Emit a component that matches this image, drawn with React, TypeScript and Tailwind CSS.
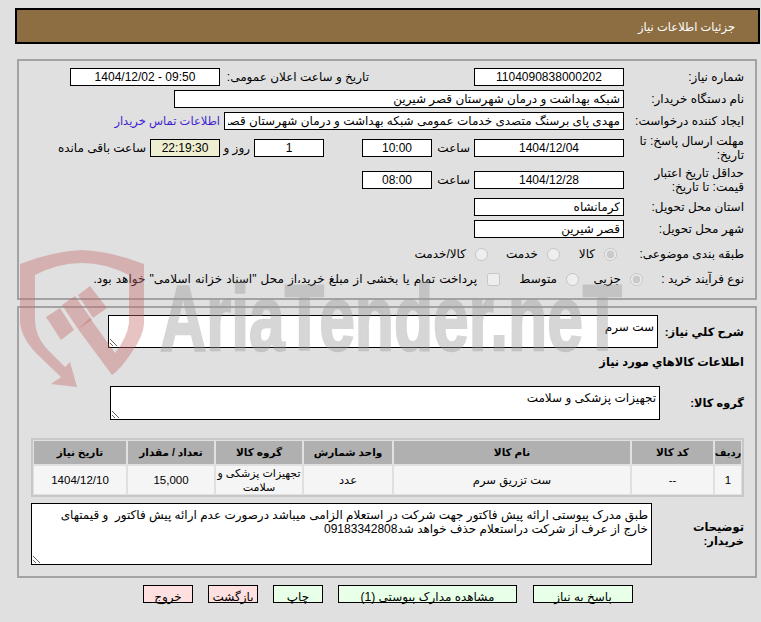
const field = 'h-[18px] border border-black bg-white px-[3px] text-[12px] text-black outline-none';
const area = 'border border-black bg-white px-[3px] pt-1 text-[12px] leading-[14px] outline-none';
const fontStack = { fontFamily: '"Liberation Sans", "DejaVu Sans", sans-serif' };

const Label = ({ children, bold }: { children: React.ReactNode; bold?: boolean }) => (
  <div className={`w-[114px] shrink-0 leading-[14px] ${bold ? 'text-[11.4px] font-bold' : 'text-[12px]'}`}>{children}</div>
);

const Field = ({ value, w, center = true }: { value: string; w: string; center?: boolean }) => (
  <input readOnly value={value} className={`${field} ${w} ${center ? 'text-center' : 'text-right'}`} />
);

const Radio = ({ checked }: { checked?: boolean }) => (
  <input type="radio" disabled checked={!!checked} readOnly className="m-0 h-[13px] w-[13px] shrink-0" />
);

const cols = ['w-[26px]', 'w-[81px]', 'w-[236px]', 'w-[88px]', 'w-[86px]', 'w-[86px]', 'w-[92px]'];
const heads = ['رديف', 'کد کالا', 'نام کالا', 'واحد شمارش', 'گروه کالا', 'تعداد / مقدار', 'تاريخ نياز'];
const cells = ['1', '--', 'ست تزریق سرم', 'عدد', 'تجهیزات پزشکی و\nسلامت', '15,000', '1404/12/10'];

const Watermark = () => (
  <svg className="absolute left-0 top-0 pointer-events-none" width="761" height="622" viewBox="0 0 761 622">
    <g fill="#c46a6a" fillOpacity="0.4">
      <path d="M82 250 Q50 252 20 264 V323 Q22 340 40 357 L61 377 L51 384 L77 387 L70 362 L65 367 L46 348 Q35 335 35 320 V275 Q58 263 82 263 Q106 263 129 275 V323 Q127 338 115 353 L90 318 L78 329 L112 375 Q120 370 132 352 Q144 335 144 323 V264 Q114 252 82 250 Z" />
      <path d="M62 305 L75 296 L92 320 L78 329 Z" />
      <path d="M78 295 L90 286 L107 308 L93 318 Z" />
      <path d="M46 317 L60 308 L74 330 L61 340 Z" />
    </g>
    <text
      x="160"
      y="350"
      direction="ltr"
      textLength="462"
      lengthAdjust="spacingAndGlyphs"
      fontFamily="Liberation Sans"
      fontWeight="700"
      fontSize="93"
      fill="#9a9a9a"
      stroke="#9a9a9a"
      strokeWidth="2.5"
      opacity="0.4"
    >
      AriaTender.neT
    </text>
  </svg>
);

export default function App() {
  return (
    <div dir="rtl" style={fontStack} className="relative h-[622px] w-[761px] overflow-hidden bg-[#e0e0e0] text-[12px] text-black">
      <div className="pt-2 pl-[15px] pr-px">
        <div className="flex h-9 items-center border-2 border-black bg-[#8d6e42] pr-[23px] pt-[3px] text-[11.5px] text-white">
          جزئيات اطلاعات نياز
        </div>
      </div>

      <div className="ml-[17px] mr-[4px] mt-[15px] h-[241px] border-2 border-[#a3a3a3] pr-[11px] pt-[7px]">
        <div className="flex h-[18px] items-center">
          <Label>شماره نياز:</Label>
          <Field value="1104090838000202" w="mr-[6px] w-[150px]" />
          <div className="mr-[105px] w-[145px] whitespace-nowrap">تاریخ و ساعت اعلان عمومی:</div>
          <Field value="09:50 - 1404/12/02" w="mr-1 w-[150px]" />
        </div>
        <div className="mt-1 flex h-[18px] items-center">
          <Label>نام دستگاه خريدار:</Label>
          <Field value="شبکه بهداشت و درمان شهرستان قصر شیرین" w="mr-[6px] w-[450px]" center={false} />
        </div>
        <div className="mt-1 flex h-[18px] items-center">
          <Label>ایجاد کننده درخواست:</Label>
          <Field
            value="مهدی پای برسنگ متصدی خدمات عمومی شبکه بهداشت و درمان شهرستان قصر شیرین"
            w="mr-[6px] w-[400px]"
            center={false}
          />
          <span className="mr-1 mt-[2px] whitespace-nowrap text-[11.5px] text-[#3f1fd0]">اطلاعات تماس خريدار</span>
        </div>
        <div className="mt-[9px] flex h-[18px] items-center">
          <Label>مهلت ارسال پاسخ: تا تاریخ:</Label>
          <Field value="1404/12/04" w="mr-[6px] w-[150px]" />
          <span className="w-[42px] pr-1">ساعت</span>
          <Field value="10:00" w="w-[70px]" />
          <div className="w-[38px]" />
          <Field value="1" w="w-[70px]" />
          <span className="w-[34px] pr-1 whitespace-nowrap">روز و</span>
          <input
            readOnly
            value="22:19:30"
            className="h-[18px] w-[70px] border border-black bg-[#eeeed1] text-center text-[12px] outline-none"
          />
          <span className="mr-1 whitespace-nowrap">ساعت باقی مانده</span>
        </div>
        <div className="mt-[14px] flex h-[18px] items-center">
          <Label>حداقل تاریخ اعتبار قیمت: تا تاریخ:</Label>
          <Field value="1404/12/28" w="mr-[6px] w-[150px]" />
          <span className="w-[42px] pr-1">ساعت</span>
          <Field value="08:00" w="w-[70px]" />
        </div>
        <div className="mt-[9px] flex h-[18px] items-center">
          <Label>استان محل تحويل:</Label>
          <Field value="کرمانشاه" w="mr-[6px] w-[150px]" center={false} />
        </div>
        <div className="mt-1 flex h-[18px] items-center">
          <Label>شهر محل تحويل:</Label>
          <Field value="قصر شیرین" w="mr-[6px] w-[150px]" center={false} />
        </div>
        <div className="mt-[7px] flex h-[18px] items-center">
          <Label>طبقه بندی موضوعی:</Label>
          <div className="mr-[13px] flex items-center gap-[9px]">
            <Radio checked />
            <span className="w-[35px]">کالا</span>
          </div>
          <div className="flex items-center gap-[9px]">
            <Radio />
            <span className="w-[50px]">خدمت</span>
          </div>
          <div className="flex items-center gap-[9px]">
            <Radio />
            <span className="whitespace-nowrap">کالا/خدمت</span>
          </div>
        </div>
        <div className="mt-[7px] flex h-[18px] items-center">
          <Label>نوع فرآيند خريد :</Label>
          <div className="mr-[-13px] flex items-center gap-[9px]">
            <Radio checked />
            <span className="w-[42px]">جزیی</span>
          </div>
          <div className="flex items-center gap-[9px]">
            <Radio />
            <span className="w-[57px]">متوسط</span>
          </div>
          <div className="flex items-center gap-[10px]">
            <input type="checkbox" disabled readOnly className="m-0 h-[13px] w-[13px] shrink-0" />
            <span className="whitespace-nowrap [word-spacing:0.8px]">
              پرداخت تمام يا بخشی از مبلغ خرید،از محل "اسناد خزانه اسلامی" خواهد بود.
            </span>
          </div>
        </div>
      </div>

      <div className="ml-[17px] mr-[4px] mt-[6px] h-[272px] border-2 border-[#a3a3a3] pr-[11px] pt-[7px]">
        <div className="flex h-[33px] items-center">
          <Label bold>شرح کلي نياز:</Label>
          <textarea readOnly value="ست سرم" className={`mr-[-28px] h-[33px] w-[550px] ${area}`} />
        </div>
        <div className="mt-[8px] flex h-[14px] items-center whitespace-nowrap text-[11.4px] font-bold">اطلاعات کالاهاي مورد نياز</div>
        <div className="mt-[16px] flex h-[34px] items-center">
          <Label bold>گروه کالا:</Label>
          <textarea readOnly value="تجهیزات پزشکی و سلامت" className={`mr-[-30px] h-[34px] w-[550px] ${area}`} />
        </div>
        <div className="mt-[18px] flex h-[59px] w-[713px] gap-[2px] border-2 border-[#c8c8c8] p-px">
          {cols.map((w, i) => (
            <div key={w + i} className={`flex ${w} shrink-0 flex-col gap-[2px]`}>
              <div className={`flex h-[23px] items-center justify-center whitespace-nowrap bg-[#b0b0b0] font-bold ${i === 0 ? 'text-[10px]' : 'text-[10.5px]'}`}>{heads[i]}</div>
              <div className={`flex h-[28px] items-center justify-center whitespace-pre bg-[#f5f5f5] text-center leading-[14px] ${i === 4 ? 'text-[11px]' : 'text-[11.5px]'}`}>{cells[i]}</div>
            </div>
          ))}
        </div>
        <div className="mt-[6px] flex items-center">
          <div className="w-[92px] shrink-0 text-[11.4px] font-bold leading-[14px]">توضیحات خریدار:</div>
          <textarea
            readOnly
            value={'طبق مدرک پیوستی ارائه پیش فاکتور جهت شرکت در استعلام الزامی میباشد درصورت عدم ارائه پیش فاکتور  و قیمتهای خارج از عرف از شرکت دراستعلام حذف خواهد شد09183342808'}
            className={`h-[62px] w-[621px] ${area}`}
          />
        </div>
      </div>

      <div className="mr-[128px] mt-[7px] flex h-[18px] items-stretch text-[12px]">
        <button className="w-[100px] border border-black bg-[#e8ffe8] pt-[2px]">پاسخ به نياز</button>
        <button className="mr-[16px] w-[179px] border border-black bg-[#e8ffe8] pt-[2px]">مشاهده مدارک پیوستی (1)</button>
        <button className="mr-[15px] w-[50px] border border-black bg-[#e8ffe8] pt-[2px]">چاپ</button>
        <button className="mr-[15px] w-[50px] border border-black bg-[#ffe0e0] pt-[2px]">بازگشت</button>
        <button className="mr-[15px] w-[50px] border border-black bg-[#ffe0e0] pt-[2px]">خروج</button>
      </div>

      <Watermark />
    </div>
  );
}
